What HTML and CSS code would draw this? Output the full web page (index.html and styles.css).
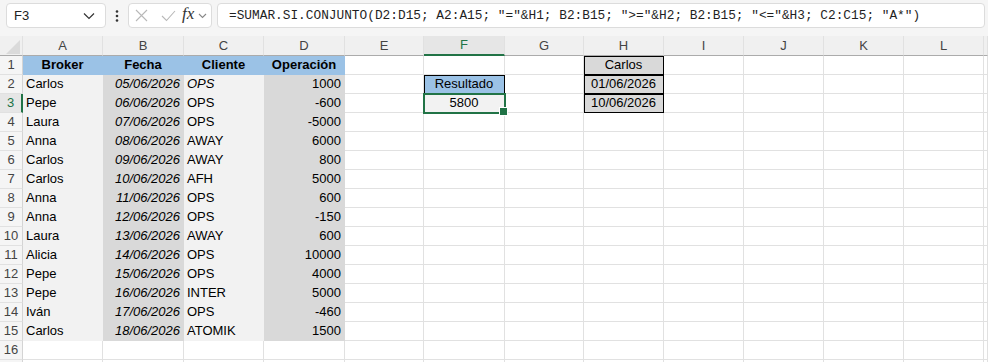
FILE: index.html
```html
<!DOCTYPE html>
<html lang="es">
<head>
  <meta charset="UTF-8" />
  <title>Libro1 - Excel</title>
  <link rel="stylesheet" href="styles.css">
</head>
<body>
  <div class="toolbar">
    <div class="namebox">
      <span>F3</span>
      <svg width="12" height="8" viewBox="0 0 12 8"><path d="M1 1.5 L6 6.5 L11 1.5" fill="none" stroke="#333" stroke-width="1.2"/></svg>
    </div>
    <div class="dots">
      <svg width="4" height="12" viewBox="0 0 4 12"><circle cx="2" cy="1.5" r="1.3" fill="#333"/><circle cx="2" cy="6" r="1.3" fill="#333"/><circle cx="2" cy="10.5" r="1.3" fill="#333"/></svg>
    </div>
    <div class="fxbox">
      <svg width="13" height="13" viewBox="0 0 13 13"><path d="M1 1 L12 12 M12 1 L1 12" stroke="#b8b8b8" stroke-width="1.1" fill="none"/></svg>
      <svg width="15" height="12" viewBox="0 0 15 12"><path d="M1 6 L5.5 10.5 L14 1" stroke="#b8b8b8" stroke-width="1.1" fill="none"/></svg>
      <span class="fx">fx</span>
      <svg width="9" height="6" viewBox="0 0 9 6"><path d="M1 1 L4.5 4.5 L8 1" fill="none" stroke="#888" stroke-width="1.1"/></svg>
    </div>
    <div class="formula">=SUMAR.SI.CONJUNTO(D2:D15; A2:A15; "="&amp;H1; B2:B15; "&gt;="&amp;H2; B2:B15; "&lt;="&amp;H3; C2:C15; "A*")</div>
  </div>

  <table class="sheet">
    <colgroup>
      <col style="width:23px"><col style="width:80px"><col style="width:81px"><col style="width:80px">
      <col style="width:81px"><col style="width:79px"><col style="width:81px"><col style="width:79px">
      <col style="width:80px"><col style="width:80px"><col style="width:80px"><col style="width:80px">
      <col style="width:80px"><col style="width:4px">
    </colgroup>
    <tr class="heads">
      <th class="corner"><svg width="14" height="14" viewBox="0 0 14 14"><polygon points="14,0 14,14 0,14" fill="#dadada"/></svg></th>
      <th>A</th><th>B</th><th>C</th><th>D</th><th>E</th><th class="on">F</th><th>G</th><th>H</th><th>I</th><th>J</th><th>K</th><th>L</th><th></th>
    </tr>
    <tr>
      <td class="rn">1</td>
      <td class="hd">Broker</td><td class="hd">Fecha</td><td class="hd">Cliente</td><td class="hd">Operación</td>
      <td></td><td></td><td></td><td class="box dk c">Carlos</td><td></td><td></td><td></td><td></td><td></td>
    </tr>
    <tr>
      <td class="rn">2</td>
      <td class="lt">Carlos</td><td class="dk date">05/06/2026</td><td class="lt i">OPS</td><td class="dk num">1000</td>
      <td></td><td class="box blue c">Resultado</td><td></td><td class="box dk c">01/06/2026</td><td></td><td></td><td></td><td></td><td></td>
    </tr>
    <tr>
      <td class="rn on">3</td>
      <td class="lt">Pepe</td><td class="dk date">06/06/2026</td><td class="lt">OPS</td><td class="dk num">-600</td>
      <td></td><td class="lt c sel">5800</td><td></td><td class="box dk c">10/06/2026</td><td></td><td></td><td></td><td></td><td></td>
    </tr>
    <tr>
      <td class="rn">4</td>
      <td class="lt">Laura</td><td class="dk date">07/06/2026</td><td class="lt">OPS</td><td class="dk num">-5000</td>
      <td></td><td></td><td></td><td></td><td></td><td></td><td></td><td></td><td></td>
    </tr>
    <tr>
      <td class="rn">5</td>
      <td class="lt">Anna</td><td class="dk date">08/06/2026</td><td class="lt">AWAY</td><td class="dk num">6000</td>
      <td></td><td></td><td></td><td></td><td></td><td></td><td></td><td></td><td></td>
    </tr>
    <tr>
      <td class="rn">6</td>
      <td class="lt">Carlos</td><td class="dk date">09/06/2026</td><td class="lt">AWAY</td><td class="dk num">800</td>
      <td></td><td></td><td></td><td></td><td></td><td></td><td></td><td></td><td></td>
    </tr>
    <tr>
      <td class="rn">7</td>
      <td class="lt">Carlos</td><td class="dk date">10/06/2026</td><td class="lt">AFH</td><td class="dk num">5000</td>
      <td></td><td></td><td></td><td></td><td></td><td></td><td></td><td></td><td></td>
    </tr>
    <tr>
      <td class="rn">8</td>
      <td class="lt">Anna</td><td class="dk date">11/06/2026</td><td class="lt">OPS</td><td class="dk num">600</td>
      <td></td><td></td><td></td><td></td><td></td><td></td><td></td><td></td><td></td>
    </tr>
    <tr>
      <td class="rn">9</td>
      <td class="lt">Anna</td><td class="dk date">12/06/2026</td><td class="lt">OPS</td><td class="dk num">-150</td>
      <td></td><td></td><td></td><td></td><td></td><td></td><td></td><td></td><td></td>
    </tr>
    <tr>
      <td class="rn">10</td>
      <td class="lt">Laura</td><td class="dk date">13/06/2026</td><td class="lt">AWAY</td><td class="dk num">600</td>
      <td></td><td></td><td></td><td></td><td></td><td></td><td></td><td></td><td></td>
    </tr>
    <tr>
      <td class="rn">11</td>
      <td class="lt">Alicia</td><td class="dk date">14/06/2026</td><td class="lt">OPS</td><td class="dk num">10000</td>
      <td></td><td></td><td></td><td></td><td></td><td></td><td></td><td></td><td></td>
    </tr>
    <tr>
      <td class="rn">12</td>
      <td class="lt">Pepe</td><td class="dk date">15/06/2026</td><td class="lt">OPS</td><td class="dk num">4000</td>
      <td></td><td></td><td></td><td></td><td></td><td></td><td></td><td></td><td></td>
    </tr>
    <tr>
      <td class="rn">13</td>
      <td class="lt">Pepe</td><td class="dk date">16/06/2026</td><td class="lt">INTER</td><td class="dk num">5000</td>
      <td></td><td></td><td></td><td></td><td></td><td></td><td></td><td></td><td></td>
    </tr>
    <tr>
      <td class="rn">14</td>
      <td class="lt">Iván</td><td class="dk date">17/06/2026</td><td class="lt">OPS</td><td class="dk num">-460</td>
      <td></td><td></td><td></td><td></td><td></td><td></td><td></td><td></td><td></td>
    </tr>
    <tr>
      <td class="rn">15</td>
      <td class="lt">Carlos</td><td class="dk date">18/06/2026</td><td class="lt">ATOMIK</td><td class="dk num">1500</td>
      <td></td><td></td><td></td><td></td><td></td><td></td><td></td><td></td><td></td>
    </tr>
    <tr>
      <td class="rn">16</td>
      <td></td><td></td><td></td><td></td><td></td><td></td><td></td><td></td><td></td><td></td><td></td><td></td><td></td>
    </tr>
    <tr>
      <td class="rn"></td>
      <td></td><td></td><td></td><td></td><td></td><td></td><td></td><td></td><td></td><td></td><td></td><td></td><td></td>
    </tr>
  </table>
</body>
</html>
```

FILE: styles.css
```css
* {
  box-sizing: border-box;
}

body {
  margin: 0;
  font-family: "Liberation Sans", Arial, sans-serif;
  background: #fff;
  color: #000;
  overflow: hidden;
}

/* formula bar */

.toolbar {
  display: flex;
  align-items: flex-start;
  height: 36px;
  padding: 3px 3px 0 6px;
  background: #f5f5f5;
}

.namebox,
.fxbox,
.formula {
  height: 25px;
  background: #fff;
  border: 1px solid #dcdcdc;
  border-radius: 4px;
}

.namebox {
  width: 100px;
  display: flex;
  align-items: center;
  justify-content: space-between;
  padding: 0 10px 0 7px;
  font-size: 13px;
  color: #222;
}

.dots {
  width: 22px;
  height: 25px;
  display: flex;
  align-items: center;
  justify-content: center;
}

.fxbox {
  width: 84px;
  display: flex;
  align-items: center;
  padding: 0 2px 0 6px;
}

.fxbox svg:first-child {
  margin-right: 13px;
}

.fx {
  font-family: "Liberation Serif", serif;
  font-style: italic;
  font-size: 17px;
  color: #333;
  margin: -3px 4px 0 6px;
}

.formula {
  flex: 1;
  margin-left: 5px;
  padding: 0 11px;
  font-family: "Liberation Mono", monospace;
  font-size: 12.8px;
  line-height: 23px;
  color: #1f1f1f;
  white-space: nowrap;
  overflow: hidden;
}

/* grid */

.sheet {
  border-collapse: separate;
  border-spacing: 0;
  table-layout: fixed;
  width: 988px;
  font-size: 13px;
}

.sheet td,
.sheet th {
  height: 19px;
  padding: 0 3px;
  line-height: 18px;
  border-right: 1px solid #e1e1e1;
  border-bottom: 1px solid #e1e1e1;
  white-space: nowrap;
  overflow: hidden;
  text-align: left;
}

.sheet td:last-child,
.sheet th:last-child {
  padding: 0;
}

.heads th {
  background: #f0f0f0;
  color: #444;
  font-weight: normal;
  text-align: center;
  border-bottom-color: #ababab;
}

.heads th.on {
  background: #e6e6e6;
  color: #217346;
  border-bottom: 2px solid #217346;
}

.heads th.corner {
  padding: 0 2px 1px 0;
  vertical-align: bottom;
}

.corner svg {
  display: block;
  margin-left: auto;
}

.sheet td.rn {
  background: #f5f5f5;
  color: #444;
  text-align: center;
  padding: 0;
  border-right-color: #d4d4d4;
}

.sheet td.rn.on {
  background: #e6e6e6;
  color: #217346;
  border-right: 2px solid #217346;
}

.sheet td.hd {
  background: #9bc2e6;
  border-color: #9bc2e6;
  font-weight: bold;
  text-align: center;
}

.sheet td.lt {
  background: #f2f2f2;
  border-color: #f2f2f2;
}

.sheet td.dk {
  background: #d9d9d9;
  border-color: #d9d9d9;
}

.sheet td.blue {
  background: #9bc2e6;
}

.sheet td.num {
  text-align: right;
}

.sheet td.date {
  font-style: italic;
  text-align: right;
}

.i {
  font-style: italic;
}

.sheet td.c {
  text-align: center;
}

.sheet td.box {
  border-color: #000;
  box-shadow: inset 1px 1px 0 #000;
}

.sheet td.sel {
  position: relative;
  overflow: visible;
  border-right-color: #000;
  border-bottom-color: #000;
  outline: 2px solid #217346;
  outline-offset: -1px;
}

.sel::after {
  content: "";
  position: absolute;
  right: -4px;
  bottom: -4px;
  width: 7px;
  height: 7px;
  background: #217346;
  border: 1px solid #fff;
}
```
